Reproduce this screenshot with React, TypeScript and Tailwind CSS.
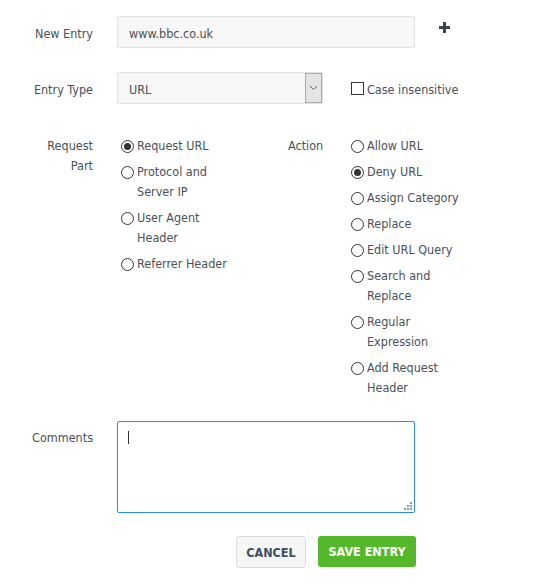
import React from "react";

const font = { fontFamily: '"DejaVu Sans Condensed", "DejaVu Sans", Tahoma, sans-serif' };

function Radio({ checked, lines }: { checked?: boolean; lines: string[] }) {
  return (
    <div className="flex items-start">
      <span className="mt-[4px] ml-[4px] flex h-[13px] w-[13px] shrink-0 items-center justify-center rounded-full border border-[#333] bg-white">
        {checked && <span className="h-[7px] w-[7px] rounded-full bg-[#333]" />}
      </span>
      <span className="ml-[3px] leading-[20px]">
        {lines.map((l, i) => (
          <span key={i} className="block">{l}</span>
        ))}
      </span>
    </div>
  );
}

export default function App() {
  return (
    <div className="h-[586px] w-[535px] bg-white pt-[16px] text-[12.5px] text-[#4a5059]" style={font}>
      {/* New Entry */}
      <div className="flex h-[32px] items-center">
        <div className="w-[93px] pt-[4px] text-right">New Entry</div>
        <div className="ml-[24px] flex h-[32px] w-[298px] items-center rounded-[2px] border border-[#e2e2e2] bg-[#f7f7f7] px-[11px] pt-[4px]">
          www.bbc.co.uk
        </div>
        <svg className="ml-[24px] self-start mt-[6px]" width="11" height="11" viewBox="0 0 11 11">
          <rect x="4" y="0" width="3" height="11" fill="#3b4450" />
          <rect x="0" y="4" width="11" height="3" fill="#3b4450" />
        </svg>
      </div>

      {/* Entry Type */}
      <div className="mt-[24px] flex h-[32px] items-center">
        <div className="w-[93px] pt-[4px] text-right">Entry Type</div>
        <div className="ml-[24px] flex h-[32px] w-[206px] items-stretch rounded-[2px] border border-[#e2e2e2] bg-[#f7f7f7]">
          <div className="flex flex-1 items-center px-[11px] pt-[4px]">URL</div>
          <div className="flex w-[17px] items-center justify-center border border-[#a9a9a9] bg-[#e4e4e4]">
            <svg width="9" height="6" viewBox="0 0 9 6">
              <path d="M1 1 L4.5 4.5 L8 1" fill="none" stroke="#666" strokeWidth="1" />
            </svg>
          </div>
        </div>
        <div className="ml-[28px] flex items-center">
          <span className="h-[13px] w-[13px] border border-[#333] bg-white" />
          <span className="ml-[3px] pt-[5px]">Case insensitive</span>
        </div>
      </div>

      {/* Request Part / Action */}
      <div className="mt-[32px] flex items-start">
        <div className="w-[93px] text-right leading-[20px]">
          <div>Request</div>
          <div>Part</div>
        </div>
        <div className="ml-[24px] flex w-[147px] flex-col gap-[6px]">
          <Radio checked lines={["Request URL"]} />
          <Radio lines={["Protocol and", "Server IP"]} />
          <Radio lines={["User Agent", "Header"]} />
          <Radio lines={["Referrer Header"]} />
        </div>
        <div className="ml-[24px] w-[63px] leading-[20px]">Action</div>
        <div className="flex flex-col gap-[6px] -ml-[4px]">
          <Radio lines={["Allow URL"]} />
          <Radio checked lines={["Deny URL"]} />
          <Radio lines={["Assign Category"]} />
          <Radio lines={["Replace"]} />
          <Radio lines={["Edit URL Query"]} />
          <Radio lines={["Search and", "Replace"]} />
          <Radio lines={["Regular", "Expression"]} />
          <Radio lines={["Add Request", "Header"]} />
        </div>
      </div>

      {/* Comments */}
      <div className="mt-[23px] flex items-start">
        <div className="w-[93px] pt-[7px] text-right leading-[20px]">Comments</div>
        <div className="relative ml-[24px] h-[92px] w-[298px] rounded-[2px] border border-[#1e90f0] bg-white">
          <span className="absolute left-[10px] top-[9px] h-[13px] w-[1px] bg-[#333]" />
          <svg className="absolute bottom-[2px] right-[2px]" width="8" height="8" viewBox="0 0 8 8">
            <rect x="6" y="0" width="2" height="2" fill="#999" />
            <rect x="3" y="3" width="2" height="2" fill="#999" />
            <rect x="6" y="3" width="2" height="2" fill="#999" />
            <rect x="0" y="6" width="2" height="2" fill="#999" />
            <rect x="3" y="6" width="2" height="2" fill="#999" />
            <rect x="6" y="6" width="2" height="2" fill="#999" />
          </svg>
        </div>
      </div>

      {/* Buttons */}
      <div className="mt-[23px] flex w-[416px] justify-end gap-[12px]">
        <button className="flex h-[32px] w-[70px] items-center justify-center rounded-[3px] border border-[#dcdcdc] bg-[#f6f6f6] pt-[2px] text-[12.5px] font-bold text-[#3f4d5e]" style={font}>
          CANCEL
        </button>
        <button className="flex h-[31px] w-[98px] items-center justify-center rounded-[3px] bg-[#54b82a] pt-[2px] text-[12.5px] font-bold text-white" style={font}>
          SAVE ENTRY
        </button>
      </div>
    </div>
  );
}
